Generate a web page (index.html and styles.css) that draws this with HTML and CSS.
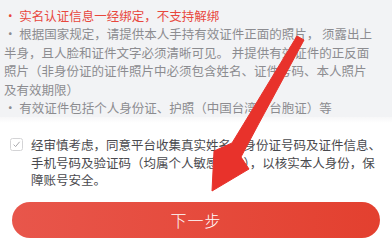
FILE: index.html
```html
<!DOCTYPE html>
<html lang="zh-CN">
<head>
<meta charset="utf-8">
<link rel="stylesheet" href="styles.css">
</head>
<body>
<div class="page">
  <section class="notice">
    <p class="line warn">· 实名认证信息一经绑定，不支持解绑</p>
    <p class="line">· 根据国家规定，请提供本人手持有效证件正面的照片， 须露出上</p>
    <p class="line">半身，且人脸和证件文字必须清晰可见。 并提供有效证件的正反面</p>
    <p class="line">照片（非身份证的证件照片中必须包含姓名、证件号码、本人照片</p>
    <p class="line">及有效期限）</p>
    <p class="line">· 有效证件包括个人身份证、护照（中国台湾·台胞证）等</p>
  </section>
  <section class="agree">
    <span class="check">
      <svg width="13" height="13" viewBox="0 0 13 13"><rect x="0.5" y="0.5" width="12" height="12" rx="2" fill="#fff" stroke="#d4d4d6"/><path d="M3.6 6.6 L5.6 8.6 L9.6 3.8" fill="none" stroke="#a8a8ac" stroke-width="1"/></svg>
    </span>
    <p class="agree-text">经审慎考虑，同意平台收集真实姓名、身份证号码及证件信息、<br>手机号码及验证码（均属个人敏感信息），以核实本人身份，保<br>障账号安全。</p>
  </section>
  <div class="btn-wrap">
    <button class="next">下一步</button>
  </div>
  <svg class="arrow" width="392" height="249" viewBox="0 0 392 249">
    <polygon points="297,36 304,40 258,125 241,157 249,169 212,191 214,151 232,143 243,125" fill="#e8322b" stroke="#e8322b" stroke-width="1" stroke-linejoin="round"/>
  </svg>
</div>
</body>
</html>
```

FILE: styles.css
```css
* { box-sizing: border-box; }
html, body {
  margin: 0;
  padding: 0;
  background: #ffffff;
}
body {
  font-family: "Noto Sans CJK SC", "Noto Sans", sans-serif;
  width: 392px;
  height: 249px;
  overflow: hidden;
}
.page {
  position: relative;
  width: 392px;
  height: 249px;
}
.notice {
  background: #f2f3f5;
  padding: 7px 10px 0 4px;
  height: 117px;
}
.line {
  margin: 0;
  font-size: 12.5px;
  line-height: 18.4px;
  color: #8c8c90;
  white-space: nowrap;
}
.line.warn {
  color: #e8473d;
}
.agree {
  display: flex;
  align-items: flex-start;
  gap: 8px;
  padding: 19px 10px 0 10px;
  background: linear-gradient(#f7f7f8, #ffffff 6px);
}
.check {
  display: flex;
  margin-top: 2px;
  flex: none;
}
.agree-text {
  margin: 0;
  font-size: 12.5px;
  line-height: 17.6px;
  color: #4a4a4e;
  white-space: nowrap;
}
.btn-wrap {
  padding: 13px 12px 0 12px;
}
.next {
  display: block;
  width: 368px;
  height: 36px;
  border: none;
  border-radius: 18px;
  background: linear-gradient(90deg, #e8564b, #e3402f);
  color: #ffffff;
  font-family: "Noto Sans CJK SC", "Noto Sans", sans-serif;
  font-size: 16px;
  font-weight: 300;
  letter-spacing: 1px;
  padding: 0;
}
.arrow {
  position: absolute;
  left: 0;
  top: 0;
  pointer-events: none;
}
```
